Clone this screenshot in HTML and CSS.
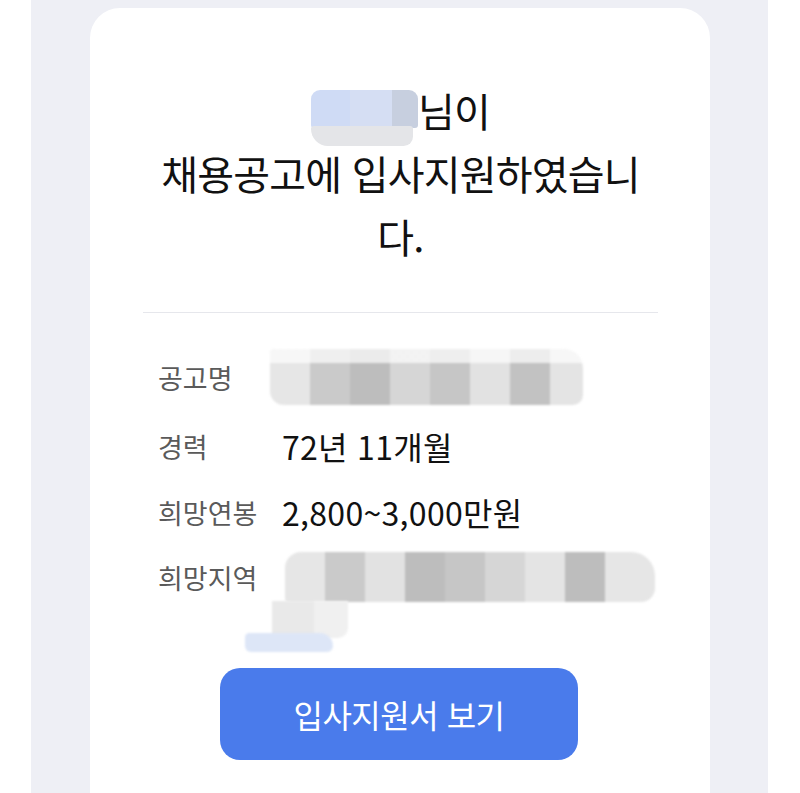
FILE: index.html
```html
<!DOCTYPE html>
<html lang="ko">
<head>
<meta charset="utf-8">
<link rel="stylesheet" href="styles.css">
</head>
<body>
<div class="page">
  <div class="card">
    <h1 class="title">
      <span class="line line-name"><span class="name-blur"></span><span>님이</span></span>
      <span class="line">채용공고에 입사지원하였습니</span>
      <span class="line">다.</span>
    </h1>
    <hr class="divider">
    <div class="rows">
      <div class="row row-job">
        <span class="label">공고명</span>
        <span class="value">
          <span class="pix pix-job">
            <i class="c1"></i><i class="c2"></i><i class="c3"></i><i class="c4"></i><i class="c5"></i><i class="c6"></i><i class="c7"></i><i class="c8"></i>
          </span>
        </span>
      </div>
      <div class="row">
        <span class="label">경력</span>
        <span class="value text">72년 11개월</span>
      </div>
      <div class="row">
        <span class="label">희망연봉</span>
        <span class="value text">2,800~3,000만원</span>
      </div>
      <div class="row row-area">
        <span class="label">희망지역</span>
        <span class="value">
          <span class="pix pix-area">
            <i class="c1"></i><i class="c2"></i><i class="c6"></i><i class="c3"></i><i class="c5"></i><i class="c4"></i><i class="c8"></i><i class="c3"></i><i class="c1"></i>
          </span>
        </span>
      </div>
      <div class="tail">
        <span class="tail-gray"></span>
        <span class="tail-blue"></span>
      </div>
    </div>
    <div class="actions">
      <button class="btn">입사지원서 보기</button>
    </div>
  </div>
</div>
</body>
</html>
```
FILE: styles.css
```css
html, body {
  margin: 0;
  padding: 0;
  background: #ffffff;
  font-family: "Noto Sans CJK KR", "Noto Sans", sans-serif;
}
.page {
  margin: 0 32px 0 31px;
  background: #eeeff5;
  height: 793px;
  padding-top: 8px;
  box-sizing: border-box;
  overflow: hidden;
}
.card {
  width: 620px;
  margin: 0 0 0 59px;
  background: #ffffff;
  border-radius: 30px 30px 0 0;
  padding: 0 52px 0 53px;
  box-sizing: border-box;
  height: 800px;
}
.title {
  margin: 0;
  padding-top: 71px;
  text-align: center;
  font-weight: 400;
  font-size: 40px;
  line-height: 63px;
  color: #111111;
  letter-spacing: -0.8px;
}
.line {
  display: block;
  white-space: nowrap;
}
.line-name {
  display: flex;
  justify-content: center;
  align-items: flex-start;
}
.name-blur {
  position: relative;
  display: block;
  width: 107px;
  height: 38px;
  margin-top: 11px;
  border-radius: 9px 9px 3px 3px;
  background: linear-gradient(90deg, #cfdbf5 0 36%, #d5def3 36% 76%, #c7cfdf 76% 100%);
  filter: blur(0.6px);
}
.name-blur::after {
  content: "";
  position: absolute;
  left: 0;
  top: 36px;
  width: 102px;
  height: 20px;
  border-radius: 4px 4px 12px 22px;
  background: #e4e5e8;
}
.divider {
  border: 0;
  height: 1px;
  background: #e6e7ec;
  margin: 44px 0 0 0;
}
.rows {
  padding: 28px 0 0 15px;
}
.row {
  display: flex;
  align-items: center;
  height: 66px;
}
.row-job {
  height: 72px;
}
.row-area {
  height: 64px;
}
.label {
  width: 124px;
  flex: none;
  font-size: 27px;
  color: #5a5a5a;
  letter-spacing: 0;
}
.value.text {
  font-size: 32px;
  color: #111111;
  letter-spacing: 0.3px;
}
.pix {
  display: flex;
  filter: blur(0.8px);
}
.pix i {
  display: block;
  width: 40px;
  height: 56px;
}
.pix-job {
  margin-left: -12px;
  border-radius: 4px 20px 10px 14px;
  overflow: hidden;
}
.pix-job i {
  background-image: linear-gradient(rgba(255,255,255,0.7) 0 14px, transparent 14px);
}
.pix-job i:last-child {
  width: 33px;
}
.pix-area {
  margin-left: 3px;
  border-radius: 16px 24px 14px 4px;
  overflow: hidden;
}
.pix-area i {
  height: 50px;
}
.pix-area i:last-child {
  width: 50px;
}
.c1 { background-color: #e6e6e6; }
.c2 { background-color: #cacaca; }
.c3 { background-color: #bdbdbd; }
.c4 { background-color: #d6d6d6; }
.c5 { background-color: #c6c6c6; }
.c6 { background-color: #e2e2e2; }
.c7 { background-color: #c2c2c2; }
.c8 { background-color: #e4e4e4; }
.tail {
  display: flex;
  flex-direction: column;
  height: 56px;
  margin-top: -8px;
}
.tail-gray {
  display: block;
  width: 76px;
  height: 37px;
  margin-left: 114px;
  border-radius: 0 0 10px 0;
  background: linear-gradient(90deg, #e9e9e9 0 55%, #f0f0f0 55%);
  filter: blur(0.8px);
}
.tail-blue {
  display: block;
  width: 88px;
  height: 19px;
  margin-left: 87px;
  margin-top: -5px;
  border-radius: 10px 30px 14px 14px;
  background: #dde6f7;
  filter: blur(1px);
}
.actions {
  display: flex;
  justify-content: center;
  padding: 11px 3px 0 0;
}
.btn {
  width: 358px;
  height: 92px;
  border: 0;
  border-radius: 20px;
  background: #4a7beb;
  color: #ffffff;
  font-family: "Noto Sans CJK KR", "Noto Sans", sans-serif;
  font-size: 32px;
  letter-spacing: -0.5px;
  padding: 0;
}
```
